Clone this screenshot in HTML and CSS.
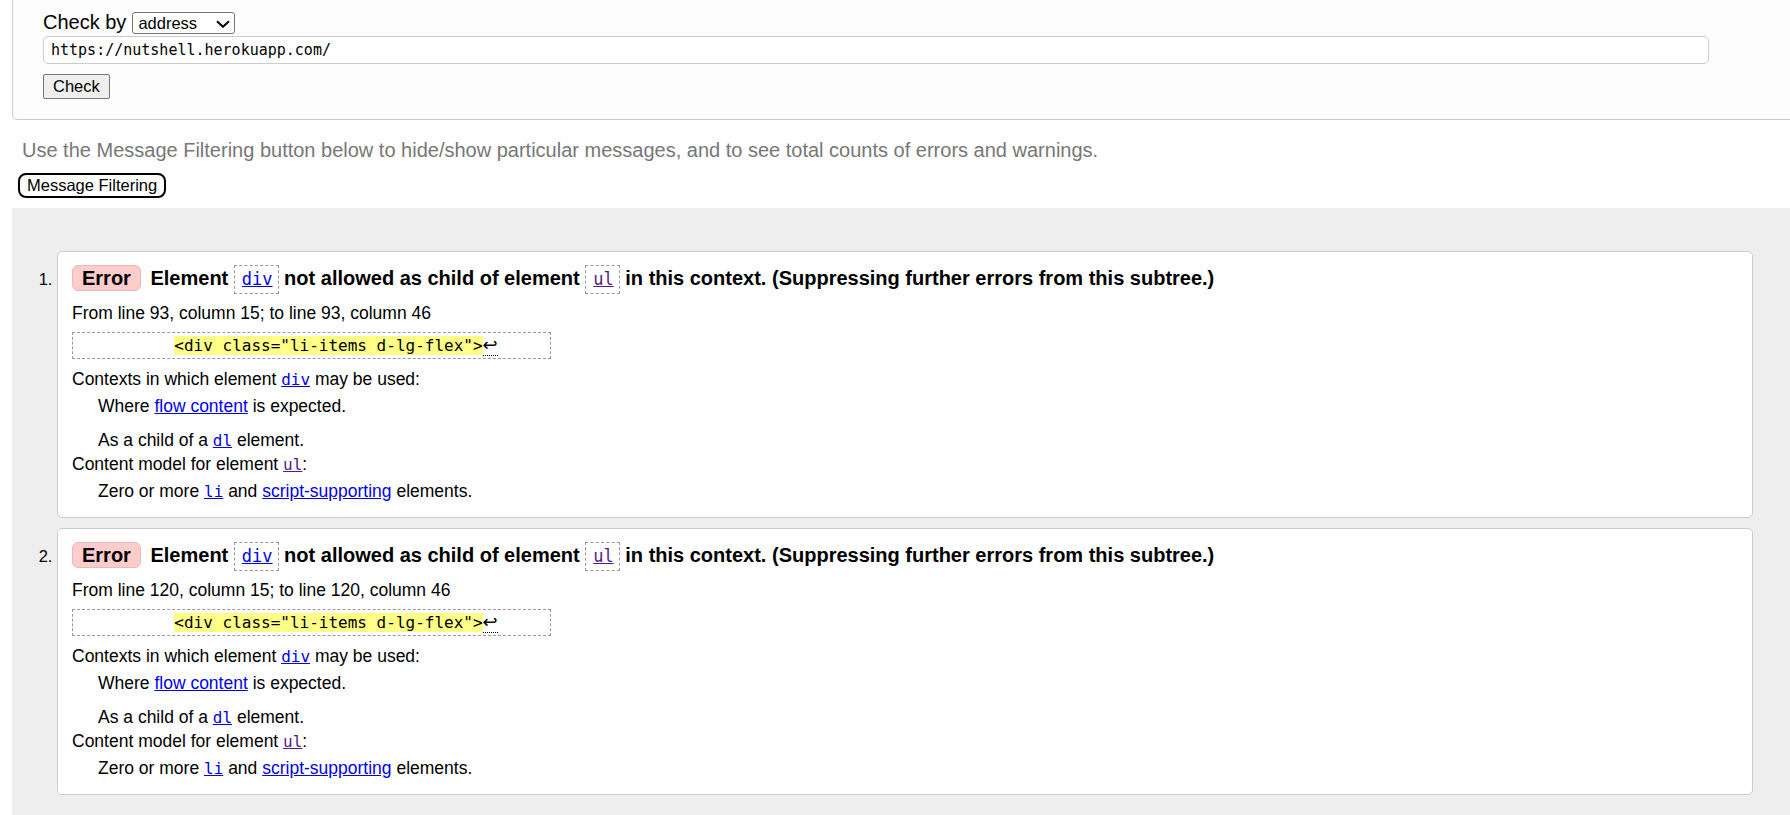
FILE: index.html
```html
<!DOCTYPE html>
<html lang="en">
<head>
<meta charset="utf-8">
<title>Nu Html Checker</title>
<link rel="stylesheet" href="styles.css">
</head>
<body>
<div class="page">
  <form class="checker">
    <div class="check-by">
      <label for="docselect">Check by</label>
      <span class="select-wrap">
        <select id="docselect" class="doc-select"><option>address</option></select>
        <svg class="chevron" width="14" height="8" viewBox="0 0 14 8" aria-hidden="true"><path d="M1 1.2 L7 6.8 L13 1.2" fill="none" stroke="#000" stroke-width="2"/></svg>
      </span>
    </div>
    <input class="url" type="text" value="https://nutshell.herokuapp.com/">
    <button class="check" type="button">Check</button>
  </form>

  <p class="hint">Use the Message Filtering button below to hide/show particular messages, and to see total counts of errors and warnings.</p>
  <button class="filter-btn" type="button">Message Filtering</button>

  <div class="results">
    <ol class="messages">
      <li class="msg">
        <p class="title"><strong class="badge">Error</strong> Element <code class="tag"><a href="#">div</a></code> not allowed as child of element <code class="tag"><a class="visited" href="#">ul</a></code> in this context. (Suppressing further errors from this subtree.)</p>
        <p class="location">From line 93, column 15; to line 93, column 46</p>
        <p class="extract"><code>          <b>&lt;div class="li-items d-lg-flex"&gt;</b><span class="lf">↩</span></code></p>
        <dl class="info">
          <dt>Contexts in which element <a href="#"><code>div</code></a> may be used:</dt>
          <dd>Where <a href="#">flow content</a> is expected.</dd>
          <dd class="next">As a child of a <a href="#"><code>dl</code></a> element.</dd>
          <dt>Content model for element <a class="visited" href="#"><code>ul</code></a>:</dt>
          <dd>Zero or more <a href="#"><code>li</code></a> and <a href="#">script-supporting</a> elements.</dd>
        </dl>
      </li>
      <li class="msg">
        <p class="title"><strong class="badge">Error</strong> Element <code class="tag"><a href="#">div</a></code> not allowed as child of element <code class="tag"><a class="visited" href="#">ul</a></code> in this context. (Suppressing further errors from this subtree.)</p>
        <p class="location">From line 120, column 15; to line 120, column 46</p>
        <p class="extract"><code>          <b>&lt;div class="li-items d-lg-flex"&gt;</b><span class="lf">↩</span></code></p>
        <dl class="info">
          <dt>Contexts in which element <a href="#"><code>div</code></a> may be used:</dt>
          <dd>Where <a href="#">flow content</a> is expected.</dd>
          <dd class="next">As a child of a <a href="#"><code>dl</code></a> element.</dd>
          <dt>Content model for element <a class="visited" href="#"><code>ul</code></a>:</dt>
          <dd>Zero or more <a href="#"><code>li</code></a> and <a href="#">script-supporting</a> elements.</dd>
        </dl>
      </li>
    </ol>
  </div>
</div>
</body>
</html>
```

FILE: styles.css
```css
html, body {
  margin: 0;
  padding: 0;
  background: #fff;
}

body {
  font-family: "Liberation Sans", Arial, sans-serif;
  color: #000;
}

.page {
  overflow: hidden;
}

/* ---------- checker form ---------- */
.checker {
  margin: 0 -20px 0 12px;
  padding: 12px 0 20px 30px;
  border: 1px solid #ccc;
  border-top: none;
  border-radius: 0 0 5px 5px;
  background: #fdfdfd;
}

.check-by {
  display: flex;
  align-items: baseline;
  gap: 6px;
}

.check-by label {
  font-size: 20px;
  line-height: 20px;
}

.select-wrap {
  position: relative;
  display: inline-block;
}

.doc-select {
  appearance: none;
  -webkit-appearance: none;
  box-sizing: border-box;
  width: 103px;
  height: 22px;
  margin: 0;
  padding: 0 0 0 5px;
  border: 1px solid #767676;
  border-radius: 3px;
  background: #fff;
  color: #000;
  font-family: "Liberation Sans", Arial, sans-serif;
  font-size: 16.5px;
}

.chevron {
  position: absolute;
  right: 5px;
  top: 8px;
  pointer-events: none;
}

.url {
  display: block;
  box-sizing: border-box;
  width: 1666px;
  height: 28px;
  margin: 2px 0 0 0;
  padding: 0 7px;
  border: 1px solid #ccc;
  border-radius: 5px;
  background: #fff;
  color: #000;
  font-family: "DejaVu Sans Mono", "Liberation Mono", monospace;
  font-size: 15px;
}

.check {
  display: block;
  margin: 10px 0 0 0;
  padding: 2px 9px;
  border: 1px solid #767676;
  border-radius: 2px;
  background: #efefef;
  color: #000;
  font-family: "Liberation Sans", Arial, sans-serif;
  font-size: 16.5px;
  line-height: 19px;
}

/* ---------- hint + filter ---------- */
.hint {
  margin: 18px 0 0 22px;
  color: #777;
  font-size: 20px;
  line-height: 24px;
}

.filter-btn {
  display: block;
  margin: 11px 0 0 18px;
  padding: 1px 7px;
  border: 2px solid #000;
  border-radius: 8px;
  background: #fff;
  color: #000;
  font-family: "Liberation Sans", Arial, sans-serif;
  font-size: 16.5px;
  line-height: 19px;
}

/* ---------- results ---------- */
.results {
  margin: 10px 0 0 12px;
  padding: 43px 37px 23px 45px;
  background: #eee;
}

.messages {
  margin: 0;
  padding: 0;
  list-style: decimal outside;
}

.msg {
  padding: 11px 14px 14px 14px;
  border: 1px solid #ccc;
  border-radius: 5px;
  background: #fff;
  font-size: 17.5px;
  line-height: 24px;
}

.msg + .msg {
  margin-top: 10px;
}

.msg::marker {
  font-size: 16.5px;
}

.msg p {
  margin: 0;
}

.msg .title {
  margin-bottom: 7px;
  font-size: 20px;
  font-weight: bold;
  line-height: 30px;
}

.badge {
  display: inline-block;
  margin-right: 4px;
  padding: 2px 9px;
  border: 1px solid #e9b9b9;
  border-radius: 6px;
  background: #fcc;
  line-height: 20px;
}

.tag {
  display: inline-block;
  padding: 0 5px 0 7px;
  border: 1px dashed #999;
  font-family: "DejaVu Sans Mono", "Liberation Mono", monospace;
  font-size: 17px;
  font-weight: normal;
  line-height: 27px;
}

a {
  color: #00e;
  text-decoration: underline;
}

a.visited {
  color: #551a8b;
}

code {
  font-family: "DejaVu Sans Mono", "Liberation Mono", monospace;
}

.msg .location {
  margin-bottom: 7px;
}

.msg .extract {
  box-sizing: border-box;
  width: 479px;
  margin-bottom: 8px;
  padding-left: 5px;
  border: 1px dashed #999;
  line-height: 25px;
  white-space: pre;
}

.extract code {
  font-size: 16px;
}

.extract b {
  font-weight: normal;
  background: #ff8;
}

.lf {
  font-family: "DejaVu Sans", sans-serif;
  font-size: 18px;
  line-height: 1;
  border-bottom: 1px dotted #000;
}

.info {
  margin: 0;
}

.info dt,
.info dd {
  line-height: 24px;
}

.info code {
  font-size: 16px;
  line-height: 1;
}

.info dd {
  margin: 3px 0 0 26px;
}

.info dd.next {
  margin-top: 10px;
}

.info dd + dt {
  margin-top: 0;
}
```
